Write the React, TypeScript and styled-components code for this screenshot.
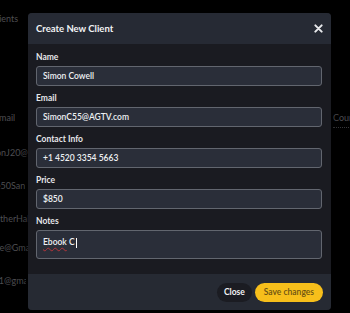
import React from "react";
import styled, { createGlobalStyle } from "styled-components";

const GlobalStyle = createGlobalStyle`
  html, body {
    margin: 0;
    padding: 0;
    background: #000;
    overflow: hidden;
  }
  body {
    font-family: Lato, "Noto Sans", sans-serif;
  }
`;

const Page = styled.div`
  position: relative;
  width: 350px;
  height: 313px;
  overflow: hidden;
  background: #000;
`;

const Backdrop = styled.div`
  display: flex;
  flex-direction: column;
  padding-top: 14px;
  margin-left: -6px;
  color: #4e4e52;
  font-size: 9px;
`;

const PageTitle = styled.div`
  height: 10px;
  line-height: 10px;
  margin-left: -3px;
  margin-bottom: 89px;
`;

const Row = styled.div<{ $gap: number }>`
  display: grid;
  grid-template-columns: 339px 40px;
  height: 10px;
  line-height: 10px;
  margin-bottom: ${p => p.$gap}px;
  white-space: nowrap;
`;

const EmailCell = styled.div<{ $shift: number }>`
  overflow: hidden;
  margin-left: ${p => p.$shift}px;
  max-width: 44px;
`;

const Country = styled.div`
  border-bottom: 1px dotted #38383b;
  padding-bottom: 4px;
`;

const Overlay = styled.div`
  position: absolute;
  z-index: 2;
  left: 28px;
  top: 13px;
  width: 303px;
  display: flex;
  flex-direction: column;
  border-radius: 4px;
  overflow: hidden;
  background: #1a1b21;
  box-shadow: 0 0 12px rgba(0, 0, 0, 0.6);
`;

const Header = styled.div`
  height: 31px;
  display: flex;
  align-items: center;
  justify-content: space-between;
  padding: 0 8px;
  background: #262a34;
`;

const Title = styled.div`
  color: #f2f3f5;
  font-size: 9.5px;
  font-weight: 700;
`;

const CloseX = styled.button`
  border: none;
  background: none;
  padding: 0;
  width: 10px;
  height: 10px;
  display: grid;
  place-items: center;
  cursor: pointer;
`;

const Body = styled.div`
  display: flex;
  flex-direction: column;
  padding: 8px 9px 15px 8px;
`;

const Field = styled.div`
  display: flex;
  flex-direction: column;
  gap: 3px;
  margin-bottom: 7px;

  &:last-child {
    margin-bottom: 0;
  }
`;

const Label = styled.label`
  color: #e6e7ea;
  font-size: 8.5px;
  font-weight: 700;
  line-height: 11px;
`;

const Input = styled.div<{ $tall?: boolean }>`
  box-sizing: border-box;
  height: ${p => (p.$tall ? 29 : 20)}px;
  display: flex;
  align-items: ${p => (p.$tall ? "flex-start" : "center")};
  padding: ${p => (p.$tall ? "6px 6px" : "0 6px")};
  border: 1px solid #62666f;
  border-radius: 3px;
  background: #2a2e39;
  color: #eef0f3;
  font-size: 8.5px;
  font-weight: 600;
`;

const Misspelled = styled.span`
  text-decoration: underline wavy #b5343a;
  text-decoration-thickness: 1px;
  text-underline-offset: 2px;
`;

const Caret = styled.span`
  display: inline-block;
  width: 1px;
  height: 10px;
  margin-left: 1px;
  background: #fff;
  vertical-align: middle;
`;

const Footer = styled.div`
  height: 36px;
  display: flex;
  align-items: center;
  justify-content: flex-end;
  gap: 3px;
  padding: 0 8px;
  background: #262a33;
`;

const Button = styled.button<{ $primary?: boolean }>`
  height: 19px;
  border: none;
  border-radius: 10px;
  padding: 0 ${p => (p.$primary ? 9 : 7)}px;
  font-family: Lato, "Noto Sans", sans-serif;
  font-size: 8.5px;
  font-weight: ${p => (p.$primary ? 600 : 700)};
  background: ${p => (p.$primary ? "#f7bf1b" : "#1b1c22")};
  color: ${p => (p.$primary ? "#6a5213" : "#f2f3f5")};
  cursor: pointer;
`;

const rows: Array<[string, number, number]> = [
  ["JasonJ20@gmail.com", -10, 23],
  ["Mike50Sanders@gmail.com", -13, 23],
  ["HeatherHall@gmail.com", -10, 19],
  ["Kate@Gmail.com", -8, 23],
  ["Tom1@gmail.com", -12, 0],
];

const fields: Array<[string, string]> = [
  ["Name", "Simon Cowell"],
  ["Email", "SimonC55@AGTV.com"],
  ["Contact Info", "+1 4520 3354 5663"],
  ["Price", "$850"],
];

export default function App() {
  return (
    <Page>
      <GlobalStyle />
      <Backdrop>
        <PageTitle>Clients</PageTitle>
        <Row $gap={25}>
          <EmailCell $shift={0}>Email</EmailCell>
          <Country>Country</Country>
        </Row>
        {rows.map(([email, shift, gap]) => (
          <Row key={email} $gap={gap}>
            <EmailCell $shift={shift}>{email}</EmailCell>
            <div />
          </Row>
        ))}
      </Backdrop>

      <Overlay>
        <Header>
          <Title>Create New Client</Title>
          <CloseX aria-label="Close">
            <svg width="9" height="9" viewBox="0 0 10 10">
              <path d="M1.5 1.5 L8.5 8.5 M8.5 1.5 L1.5 8.5" stroke="#e8e9ec" strokeWidth="2.2" strokeLinecap="round" />
            </svg>
          </CloseX>
        </Header>
        <Body>
          {fields.map(([label, value]) => (
            <Field key={label}>
              <Label>{label}</Label>
              <Input>{value}</Input>
            </Field>
          ))}
          <Field>
            <Label>Notes</Label>
            <Input $tall>
              <span>
                <Misspelled>Ebook</Misspelled> C<Caret />
              </span>
            </Input>
          </Field>
        </Body>
        <Footer>
          <Button>Close</Button>
          <Button $primary>Save changes</Button>
        </Footer>
      </Overlay>
    </Page>
  );
}
